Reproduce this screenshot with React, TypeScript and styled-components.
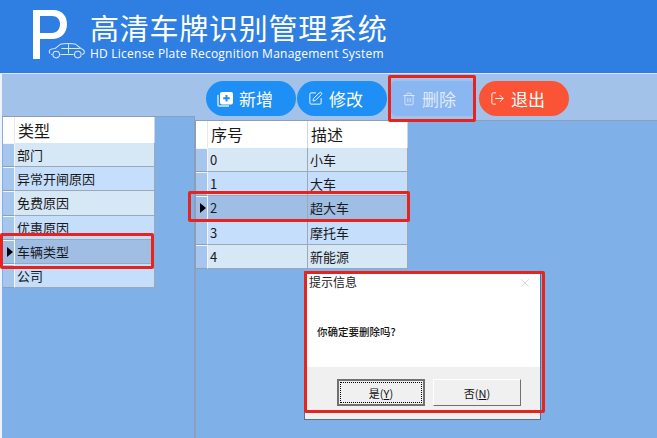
import React from "react";
import styled, { createGlobalStyle } from "styled-components";
import { SquarePen, Trash2, LogOut, X } from "lucide-react";

const Global = createGlobalStyle`
  html, body { margin: 0; padding: 0; background: #7fb0e8; }
  body { font-family: "Noto Sans CJK SC", "Liberation Sans", sans-serif; }
  * { box-sizing: border-box; }
`;

const Page = styled.div`
  position: relative;
  width: 657px;
  height: 438px;
  overflow: hidden;
  display: flex;
  flex-direction: column;
`;

const Header = styled.header`
  height: 74px;
  flex: none;
  background: #2f7fe2;
  display: flex;
  padding: 9px 0 0 33px;
  border-bottom: 1px solid #d6e4f6;
`;

const Logo = styled.div`
  position: relative;
  width: 52px;
  height: 52px;
  color: #fff;
`;

const LogoP = styled.svg`
  display: block;
`;

const CarIcon = styled.svg`
  position: absolute;
  left: 15px;
  top: 33px;
`;

const TitleBlock = styled.div`
  margin-left: 5px;
  color: #fff;
  display: flex;
  flex-direction: column;
`;

const Title = styled.div`
  font-size: 29px;
  line-height: 36px;
  height: 37px;
  letter-spacing: 0.75px;
  white-space: nowrap;
`;

const SubTitle = styled.div`
  font-family: "Open Sans", "Liberation Sans", sans-serif;
  font-size: 12px;
  line-height: 14px;
  margin-top: 1px;
  letter-spacing: 0.23px;
  white-space: nowrap;
`;

const Body = styled.main`
  flex: 1;
  display: flex;
  flex-direction: column;
  background: #a3c2ea;
  border-left: 2px solid #eef3fa;
`;

const Toolbar = styled.div`
  height: 42px;
  flex: none;
  display: flex;
  align-items: flex-start;
  padding: 7px 0 0 204px;
  gap: 1px;
`;

const ActionButton = styled.div<{ $tone: "blue" | "muted" | "red" }>`
  width: ${(p) => (p.$tone === "muted" ? "84px" : "90px")};
  margin-right: ${(p) => (p.$tone === "muted" ? "3px" : "0")};
  margin-left: ${(p) => (p.$tone === "muted" ? "3px" : "0")};
  height: 35px;
  border-radius: ${(p) => (p.$tone === "muted" ? "5px" : "18px")};
  background: ${(p) =>
    p.$tone === "blue" ? "#1e90f5" : p.$tone === "red" ? "#fb5335" : "#8ab6f2"};
  color: ${(p) => (p.$tone === "muted" ? "#dfeafb" : "#fff")};
  display: flex;
  align-items: center;
  padding-left: 11px;
  gap: 6px;
  font-size: 17px;
  line-height: 35px;
`;

const Panels = styled.div`
  flex: 1;
  display: flex;
  min-height: 0;
`;

const LeftPanel = styled.section`
  width: 193px;
  flex: none;
  background: #7fb0e8;
  border: 1px solid #8d9fb8;
  border-bottom: 0;
  border-left: 0;
  padding-left: 1px;
`;

const RightPanel = styled.section`
  flex: 1;
  background: #7fb0e8;
  border-left: 1px solid #8d9fb8;
  margin-top: 4px;
  border-top: 1px solid #8d9fb8;
`;

const Grid = styled.div<{ $columns: string; $headHeight: number }>`
  display: grid;
  grid-template-columns: ${(p) => p.$columns};
  grid-template-rows: ${(p) => p.$headHeight}px;
  grid-auto-rows: 24.2px;
  width: fit-content;
  font-size: 13px;
  color: #1a1a1a;
`;

const HeadCell = styled.div<{ $corner?: boolean }>`
  background: #fff;
  font-size: 16px;
  line-height: 27px;
  padding-left: ${(p) => (p.$corner ? "0" : "3px")};
  border-right: 1px solid ${(p) => (p.$corner ? "#e8e8e8" : "#cfd6de")};
`;

const RowHeader = styled.div<{ $current?: boolean }>`
  background: ${(p) => (p.$current ? "#a0bde4" : "#a6c6ee")};
  border-top: 1px solid #f2f6fb;
  border-right: 1px solid #f2f6fb;
  border-bottom: 1px solid #8f9fb3;
  display: flex;
  align-items: center;
  padding-left: 4px;
`;

const Arrow = styled.span`
  width: 0;
  height: 0;
  border-top: 5px solid transparent;
  border-bottom: 5px solid transparent;
  border-left: 6px solid #000;
`;

const Cell = styled.div<{ $alt: boolean; $current: boolean }>`
  line-height: 23px;
  padding-left: 2px;
  white-space: nowrap;
  background: ${(p) => (p.$current ? "#a0bde4" : p.$alt ? "#c4defc" : "#d6e7f6")};
  border-right: 1px solid #9aa8b8;
  border-bottom: 1px solid #9aa8b8;
`;

const Dialog = styled.div`
  position: absolute;
  left: 304px;
  top: 271px;
  width: 237px;
  height: 149px;
  background: #fff;
  border: 1px solid #5d6f86;
  display: flex;
  flex-direction: column;
  font-size: 11px;
  color: #111;
`;

const DialogTitle = styled.div`
  height: 30px;
  flex: none;
  display: flex;
  justify-content: space-between;
  padding: 1px 8px 0 4px;
  font-size: 12px;
  line-height: 18px;
  color: #222;
`;

const CloseIcon = styled(X)`
  margin-top: 3px;
`;

const DialogText = styled.div`
  flex: 1;
  padding: 22px 0 0 12px;
  font-weight: 500;
  font-size: 10.5px;
  line-height: 16px;
`;

const DialogFooter = styled.div`
  height: 52px;
  flex: none;
  background: #f0f0f0;
  display: flex;
  gap: 8px;
  padding: 12px 0 0 32px;
`;

const DialogButton = styled.div<{ $focused?: boolean }>`
  width: 88px;
  height: 27px;
  background: #f0f0f0;
  border: ${(p) => (p.$focused ? "2px" : "1px")} solid;
  border-color: #e9e9e9 #707070 #707070 #e9e9e9;
  border-top-color: ${(p) => (p.$focused ? "#707070" : "#fff")};
  border-left-color: ${(p) => (p.$focused ? "#707070" : "#fff")};
  display: flex;
  align-items: center;
  justify-content: center;
  font-size: 11px;
  position: relative;
  &::after {
    content: "";
    position: absolute;
    inset: 1px;
    border: ${(p) => (p.$focused ? "1px dotted #000" : "0")};
  }
  u { text-decoration: underline; }
`;

const Mark = styled.div`
  position: absolute;
  border: 3px solid #e5231f;
  border-radius: 2px;
  pointer-events: none;
`;

const MarkDelete = styled(Mark)`
  left: 388px;
  top: 75px;
  width: 88px;
  height: 47px;
`;

const MarkRow = styled(Mark)`
  left: 188px;
  top: 191px;
  width: 222px;
  height: 31px;
`;

const MarkType = styled(Mark)`
  left: 0;
  top: 233px;
  width: 154px;
  height: 36px;
`;

const MarkDialog = styled(Mark)`
  left: 304px;
  top: 271px;
  width: 241px;
  height: 142px;
`;

const types = ["部门", "异常开闸原因", "免费原因", "优惠原因", "车辆类型", "公司"];
const vehicles = ["小车", "大车", "超大车", "摩托车", "新能源"];

function AddIcon() {
  return (
    <svg width="16" height="16" viewBox="0 0 16 16">
      <path d="M1 4 V14 C1 15 2 15 2 15 H12" fill="none" stroke="#dcebfd" strokeWidth="1.4" />
      <rect x="3" y="1" width="13" height="12.5" rx="2" fill="#fff" />
      <path d="M9.5 4 V10.5 M6.2 7.2 H12.8" stroke="#1e90f5" strokeWidth="2" />
    </svg>
  );
}

function App() {
  return (
    <Page>
      <Global />
      <Header>
        <Logo>
          <LogoP width="36" height="52" viewBox="0 0 36 52">
            <path d="M0 1 H20 C30 1 34 8 34 15 C34 24 28 30 19 30 H7 V50 H0 Z M7 7 V24 H19 C24 24 27 20 27 15 C27 10 24 7 19 7 Z" fill="#fff" />
          </LogoP>
          <CarIcon width="38" height="17" viewBox="0 0 37 16" fill="none" stroke="#dbe8fa" strokeWidth="1">
            <path d="M2 11 C0 8 2 6 7 6 L12 2 C15 1 24 1 27 2 L32 6 C35 7 36 9 35 11 L33 12 M25 12 H12 M4 12 H3" />
            <circle cx="8" cy="12" r="3.2" />
            <circle cx="29" cy="12" r="3.2" />
            <path d="M13 6 H31 M20 2 V11" />
          </CarIcon>
        </Logo>
        <TitleBlock>
          <Title>高清车牌识别管理系统</Title>
          <SubTitle>HD License Plate Recognition Management System</SubTitle>
        </TitleBlock>
      </Header>
      <Body>
        <Toolbar>
          <ActionButton $tone="blue"><AddIcon />新增</ActionButton>
          <ActionButton $tone="blue"><SquarePen size={15} strokeWidth={1.5} />修改</ActionButton>
          <ActionButton $tone="muted"><Trash2 size={14} strokeWidth={1.5} />删除</ActionButton>
          <ActionButton $tone="red"><LogOut size={15} strokeWidth={1.5} />退出</ActionButton>
        </Toolbar>
        <Panels>
          <LeftPanel>
            <Grid $columns="12px 140px" $headHeight={26}>
              <HeadCell $corner />
              <HeadCell>类型</HeadCell>
              {types.map((t, i) => (
                <React.Fragment key={t}>
                  <RowHeader $current={i === 4}>{i === 4 && <Arrow />}</RowHeader>
                  <Cell $alt={i % 2 === 1} $current={i === 4}>{t}</Cell>
                </React.Fragment>
              ))}
            </Grid>
          </LeftPanel>
          <RightPanel>
            <Grid $columns="12px 100px 100px" $headHeight={27}>
              <HeadCell $corner />
              <HeadCell>序号</HeadCell>
              <HeadCell>描述</HeadCell>
              {vehicles.map((v, i) => (
                <React.Fragment key={v}>
                  <RowHeader $current={i === 2}>{i === 2 && <Arrow />}</RowHeader>
                  <Cell $alt={i % 2 === 1} $current={i === 2}>{i}</Cell>
                  <Cell $alt={i % 2 === 1} $current={i === 2}>{v}</Cell>
                </React.Fragment>
              ))}
            </Grid>
          </RightPanel>
        </Panels>
      </Body>
      <Dialog>
        <DialogTitle>提示信息<CloseIcon size={14} color="#bdbdbd" strokeWidth={1} /></DialogTitle>
        <DialogText>你确定要删除吗?</DialogText>
        <DialogFooter>
          <DialogButton $focused>是(<u>Y</u>)</DialogButton>
          <DialogButton>否(<u>N</u>)</DialogButton>
        </DialogFooter>
      </Dialog>
      <MarkDelete />
      <MarkRow />
      <MarkType />
      <MarkDialog />
    </Page>
  );
}

export default App;
